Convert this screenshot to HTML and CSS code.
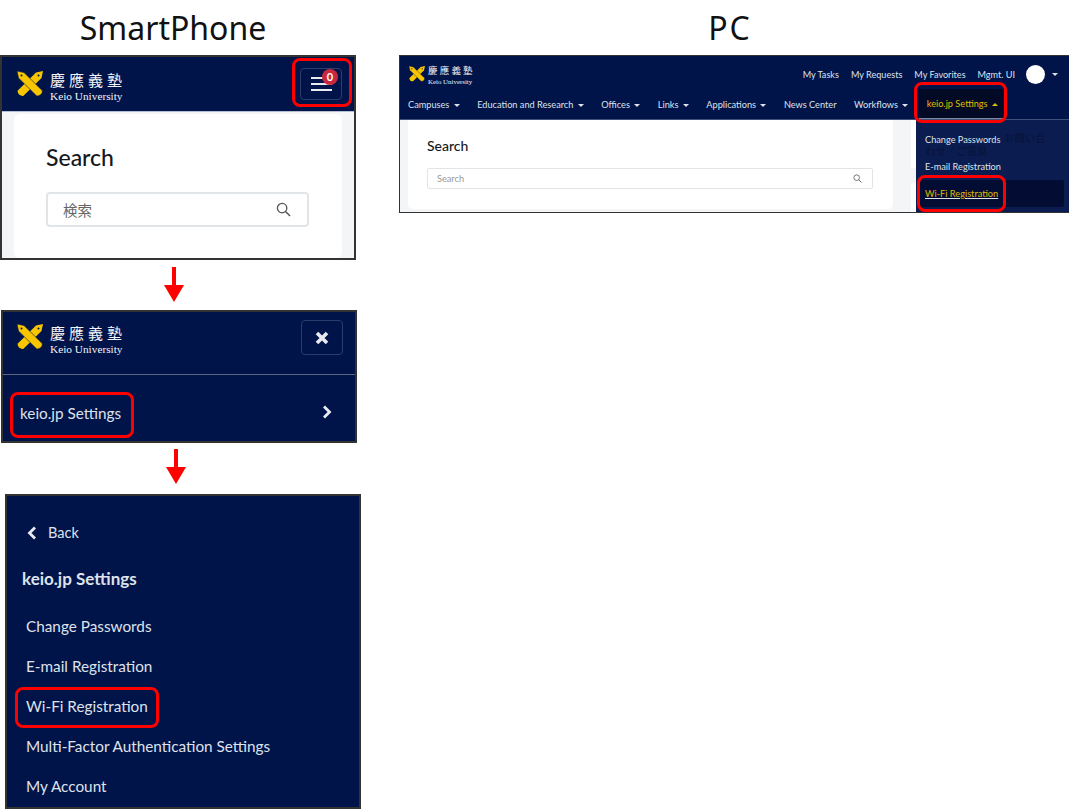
FILE: index.html
```html
<!DOCTYPE html>
<html lang="en">
<head>
  <meta charset="UTF-8">
  <meta name="viewport" content="width=device-width, initial-scale=1.0">
  <title>keio.jp Wi-Fi Registration</title>
  <link rel="stylesheet" href="styles.css">
</head>
<body>
  <svg class="defs" width="0" height="0">
    <symbol id="pens" viewBox="0 0 26 26">
      <path fill="#f7c600" d="M26 0 L19 1.500 L0.800 19.500 Q0 21 2 23.500 Q4.500 25.500 6.500 24.800 L24.500 7 Z"/>
      <path fill="#f7c600" stroke="#00144a" stroke-width="0.6" d="M0 0 L7 1.500 L25.200 19.500 Q26 21 24 23.500 Q21.500 25.500 19.500 24.800 L1.500 7 Z"/>
      <circle cx="4.500" cy="4.500" r="1" fill="#00144a"/>
      <circle cx="21.500" cy="4.500" r="1" fill="#00144a"/>
    </symbol>
    <symbol id="search" viewBox="0 0 16 16">
      <circle cx="6.500" cy="6.500" r="5" fill="none" stroke="currentColor" stroke-width="1.4"/>
      <path d="M10.200 10.200 L15 15" stroke="currentColor" stroke-width="1.600" fill="none"/>
    </symbol>
    <symbol id="arrow" viewBox="0 0 20 35">
      <path fill="#ff0000" d="M8 0 H12 V18 H20 L10 35 L0 18 H8 Z"/>
    </symbol>
  </svg>

  <div class="page">
    <div class="phone-col">
      <h2 class="title">SmartPhone</h2>

      <div class="panel phone-one">
        <div class="phone-head">
          <div class="logo">
            <svg class="pens"><use href="#pens"/></svg>
            <div class="logo-text">
              <div class="logo-jp">慶應義塾</div>
              <div class="logo-en">Keio University</div>
            </div>
          </div>
          <div class="menu-btn">
            <span class="bars"><i></i><i></i><i></i></span>
            <span class="badge">0</span>
          </div>
        </div>
        <div class="phone-body">
          <div class="card">
            <h3 class="card-title">Search</h3>
            <div class="search-box">
              <span class="search-jp">検索</span>
              <svg class="search-icon"><use href="#search"/></svg>
            </div>
          </div>
        </div>
        <span class="mark mark-menu"></span>
      </div>

      <svg class="arrow arrow-one"><use href="#arrow"/></svg>

      <div class="panel phone-two">
        <div class="phone-head tall">
          <div class="logo">
            <svg class="pens"><use href="#pens"/></svg>
            <div class="logo-text">
              <div class="logo-jp">慶應義塾</div>
              <div class="logo-en">Keio University</div>
            </div>
          </div>
          <div class="menu-btn close">
            <svg class="close-icon" viewBox="0 0 14 14"><path d="M2 2 L12 12 M12 2 L2 12" stroke="#e8eaf0" stroke-width="3.6"/></svg>
          </div>
        </div>
        <div class="settings-row">
          <span>keio.jp Settings</span>
          <svg class="chev" viewBox="0 0 10 14"><path d="M2 1.500 L7.500 7 L2 12.500" fill="none" stroke="#e8eaf0" stroke-width="2.800"/></svg>
        </div>
        <span class="mark mark-settings"></span>
      </div>

      <svg class="arrow arrow-two"><use href="#arrow"/></svg>

      <div class="panel phone-three">
        <div class="back-row">
          <svg class="chev" viewBox="0 0 10 14"><path d="M8 1.500 L2.500 7 L8 12.500" fill="none" stroke="#e8eaf0" stroke-width="2.800"/></svg>
          <span>Back</span>
        </div>
        <div class="menu-title">keio.jp Settings</div>
        <ul class="menu-list">
          <li>Change Passwords</li>
          <li>E-mail Registration</li>
          <li>Wi-Fi Registration</li>
          <li>Multi-Factor Authentication Settings</li>
          <li>My Account</li>
        </ul>
        <span class="mark mark-wifi"></span>
      </div>
    </div>

    <div class="pc-col">
      <h2 class="title pc-title">PC</h2>

      <div class="panel pc">
        <div class="pc-head">
          <div class="pc-top">
            <div class="logo small">
              <svg class="pens"><use href="#pens"/></svg>
              <div class="logo-text">
                <div class="logo-jp">慶應義塾</div>
                <div class="logo-en">Keio University</div>
              </div>
            </div>
            <div class="pc-links">
              <span>My Tasks</span>
              <span>My Requests</span>
              <span>My Favorites</span>
              <span>Mgmt. UI</span>
              <i class="avatar"></i>
              <i class="caret"></i>
            </div>
          </div>
          <nav class="pc-nav">
            <span>Campuses <i class="caret"></i></span>
            <span>Education and Research <i class="caret"></i></span>
            <span>Offices <i class="caret"></i></span>
            <span>Links <i class="caret"></i></span>
            <span>Applications <i class="caret"></i></span>
            <span>News Center</span>
            <span>Workflows <i class="caret"></i></span>
            <span class="active">keio.jp Settings <i class="caret up"></i></span>
          </nav>
        </div>
        <div class="pc-body">
          <div class="card pc-card">
            <h3 class="card-title">Search</h3>
            <div class="search-box">
              <span class="search-en">Search</span>
              <svg class="search-icon"><use href="#search"/></svg>
            </div>
          </div>
          <div class="side-cards">
            <i class="side-card first"></i>
            <i class="side-card"></i>
          </div>
          <div class="dropdown">
            <div class="drop-item">Change Passwords</div>
            <div class="ghost ghost-one">お問い合</div>
            <div class="ghost ghost-two">わせ／ご意見</div>
            <div class="drop-item">E-mail Registration</div>
            <div class="drop-item current"><u>Wi-Fi Registration</u></div>
          </div>
        </div>
        <span class="mark mark-nav"></span>
        <span class="mark mark-drop"></span>
      </div>
    </div>
  </div>
</body>
</html>
```

FILE: styles.css
```css
body {
  margin: 0;
  background: #fff;
  font-family: 'Lato', sans-serif;
  color: #dfe2ea;
  overflow: hidden;
}

.defs {
  display: block;
  height: 0;
}

.page {
  display: flex;
  width: 1069px;
  height: 809px;
}

.phone-col {
  width: 399px;
  flex: none;
}

.pc-col {
  width: 670px;
  flex: none;
}

.title {
  margin: 0;
  height: 55px;
  width: 346px;
  font-family: 'Noto Sans', sans-serif;
  font-weight: 400;
  font-size: 32px;
  line-height: 55px;
  text-align: center;
  color: #111;
}

.pc-title {
  width: 662px;
  letter-spacing: 2px;
}

.panel {
  position: relative;
  box-sizing: border-box;
  border: 2px solid #333;
  background: #00144a;
  overflow: hidden;
}

.phone-one {
  width: 356px;
  height: 205px;
}

.phone-two {
  width: 356px;
  height: 133px;
  margin-left: 1px;
}

.phone-three {
  width: 356px;
  height: 315px;
  margin-left: 5px;
}

.arrow {
  display: block;
  width: 20px;
  height: 35px;
}

.arrow-one {
  margin: 7px 0 8px 164px;
}

.arrow-two {
  margin: 6px 0 10px 166px;
}

/* highlight boxes */
.mark {
  position: absolute;
  box-sizing: border-box;
  border: 3.5px solid #f00;
  border-radius: 8px;
}

.mark-menu { left: 290px; top: 1px; width: 60px; height: 49px; }
.mark-settings { left: 7px; top: 80px; width: 124px; height: 46px; }
.mark-wifi { left: 8px; top: 191px; width: 144px; height: 41px; }
.mark-nav { left: 514px; top: 26px; width: 93px; height: 41px; }
.mark-drop { left: 517px; top: 119px; width: 89px; height: 37px; }

/* logo */
.logo {
  display: flex;
  align-items: center;
  gap: 7px;
}

.pens {
  width: 26px;
  height: 26px;
}

.logo-text {
  padding-top: 6px;
}

.logo-jp {
  font-family: 'Noto Sans CJK JP', serif;
  font-size: 15px;
  line-height: 17px;
  letter-spacing: 4px;
  color: #f2f3f6;
}

.logo-en {
  margin-top: 1.5px;
  font-family: 'Liberation Serif', serif;
  font-size: 11.3px;
  line-height: 13px;
  color: #f2f3f6;
}

.logo.small {
  gap: 3px;
}

.small .pens {
  width: 16px;
  height: 16px;
}

.small .logo-text {
  padding-top: 3px;
}

.small .logo-jp {
  font-size: 9.5px;
  line-height: 11px;
  letter-spacing: 2.2px;
}

.small .logo-en {
  font-size: 6.9px;
  line-height: 8px;
}

/* phone header */
.phone-head {
  display: flex;
  justify-content: space-between;
  align-items: center;
  height: 54px;
  padding: 0 12px 0 15px;
  border-bottom: 1px solid #b6bfd2;
  box-sizing: content-box;
}

.phone-head.tall {
  align-items: flex-start;
  height: 62px;
  padding: 0 12px 0 14px;
  border-bottom: 1px solid #5d6781;
}

.tall .logo {
  margin-top: 6px;
}

.menu-btn {
  position: relative;
  display: flex;
  align-items: center;
  justify-content: center;
  box-sizing: border-box;
  width: 42px;
  height: 32px;
  border: 1px solid #2c3c6b;
  border-radius: 4px;
}

.menu-btn.close {
  height: 35px;
  margin-top: 8px;
}

.bars i {
  display: block;
  width: 21px;
  height: 2px;
  margin: 4px 0;
  background: #e8eaf0;
}

.badge {
  position: absolute;
  top: 0;
  right: 3px;
  width: 16px;
  height: 16px;
  border-radius: 50%;
  background: #c9283c;
  color: #fff;
  font-size: 11px;
  font-weight: 700;
  line-height: 16px;
  text-align: center;
}

.close-icon {
  width: 14px;
  height: 14px;
}

.phone-body {
  height: 150px;
  padding: 2px 12px 0;
  box-sizing: border-box;
  background: #f4f5f7;
}

.card {
  box-sizing: border-box;
  height: 144px;
  padding: 27px 33px 0 32px;
  background: #fff;
  border-radius: 6px;
}

.card-title {
  margin: 0 0 19px;
  font-size: 23px;
  font-weight: 500;
  line-height: 32px;
  color: #16181d;
}

.search-box {
  display: flex;
  justify-content: space-between;
  align-items: center;
  box-sizing: border-box;
  height: 35px;
  padding: 0 16px 0 15px;
  border: 2px solid #e2e5e8;
  border-radius: 4px;
  background: #fff;
}

.search-jp {
  font-family: 'Noto Sans CJK JP', sans-serif;
  font-size: 14.5px;
  color: #666;
}

.search-icon {
  width: 15px;
  height: 15px;
  color: #555;
}

/* phone menu */
.settings-row {
  display: flex;
  justify-content: space-between;
  align-items: center;
  padding: 18px 23px 0 17px;
  font-size: 15.3px;
  line-height: 40px;
}

.settings-row .chev {
  margin-top: -3px;
}

.chev {
  width: 10px;
  height: 14px;
}

.back-row {
  display: flex;
  align-items: center;
  gap: 11px;
  padding: 25px 0 0 20px;
  font-size: 14.5px;
  line-height: 24px;
}

.menu-title {
  padding: 22px 0 0 15px;
  font-size: 17px;
  font-weight: 700;
  line-height: 24px;
}

.menu-list {
  list-style: none;
  margin: 15px 0 0;
  padding: 0 0 0 19px;
  font-size: 15.3px;
}

.menu-list li {
  height: 40px;
  line-height: 40px;
}

/* pc window */
.pc {
  width: 670px;
  height: 158px;
  border-width: 1px 0 1px 1px;
}

.pc-head {
  height: 64px;
  font-size: 9.2px;
  border-bottom: 1px solid #40507a;
  box-sizing: border-box;
}

.pc-top {
  display: flex;
  justify-content: space-between;
  align-items: center;
  height: 33px;
  padding: 3px 11px 0 9px;
  box-sizing: border-box;
}

.pc-links {
  display: flex;
  align-items: center;
  gap: 12px;
  font-size: 9.1px;
}

.avatar {
  width: 19px;
  height: 19px;
  margin-left: -1px;
  border-radius: 50%;
  background: #fff;
}

.caret {
  display: inline-block;
  width: 0;
  height: 0;
  margin-left: 2px;
  border-left: 3px solid transparent;
  border-right: 3px solid transparent;
  border-top: 3px solid #dfe2ea;
  vertical-align: middle;
}

.pc-links .caret {
  margin-left: -5px;
}

.caret.up {
  border-top: 0;
  border-bottom: 3px solid #e0bc00;
}

.pc-nav {
  display: flex;
  align-items: center;
  gap: 17.5px;
  height: 30px;
  padding-left: 8px;
}

.pc-nav .active {
  margin-left: -7px;
  padding: 0 5px 0 8px;
  line-height: 30px;
  color: #e0bc00;
  background: #020a26;
  border-bottom: 1px solid #7d869c;
  height: 30px;
  box-sizing: border-box;
}

.pc-body {
  display: flex;
  height: 92px;
  background: #f4f5f7;
  overflow: hidden;
}

.pc-card {
  width: 485px;
  height: 89px;
  margin-left: 8px;
  padding: 14px 20px 0 19px;
  border-radius: 0 0 5px 5px;
}

.pc-card .card-title {
  margin-bottom: 10px;
  font-size: 14px;
  line-height: 24px;
}

.pc-card .search-box {
  height: 21px;
  padding: 0 10px 0 9px;
  border-width: 1px;
  border-radius: 2px;
}

.search-en {
  font-size: 9.2px;
  color: #999;
}

.pc-card .search-icon {
  width: 9px;
  height: 9px;
}

.side-cards {
  display: flex;
  flex-direction: column;
  gap: 15px;
  width: 5px;
  margin-left: 18px;
}

.side-card {
  flex: 1;
  background: #fff;
}

.side-card.first {
  flex: none;
  height: 48px;
}

.dropdown {
  position: relative;
  flex: 1;
  padding-top: 6px;
  background: #0b1d50;
  font-size: 9.2px;
}

.drop-item {
  box-sizing: border-box;
  height: 27px;
  padding: 8px 0 0 9px;
  line-height: 11px;
}

.drop-item.current {
  margin: 0 5px 0 4px;
  padding-left: 5px;
  background: #030d33;
  color: #e0bc00;
  border-radius: 2px;
}

.drop-item u {
  text-decoration-color: #dfe2ea;
}

.ghost {
  position: absolute;
  font-family: 'Noto Sans CJK JP', sans-serif;
  font-size: 10.4px;
  font-weight: 700;
  line-height: 10px;
  color: #07153f;
  white-space: nowrap;
}

.ghost-one { left: 88px; top: 13px; }
.ghost-two { left: 9px; top: 26px; }
```
